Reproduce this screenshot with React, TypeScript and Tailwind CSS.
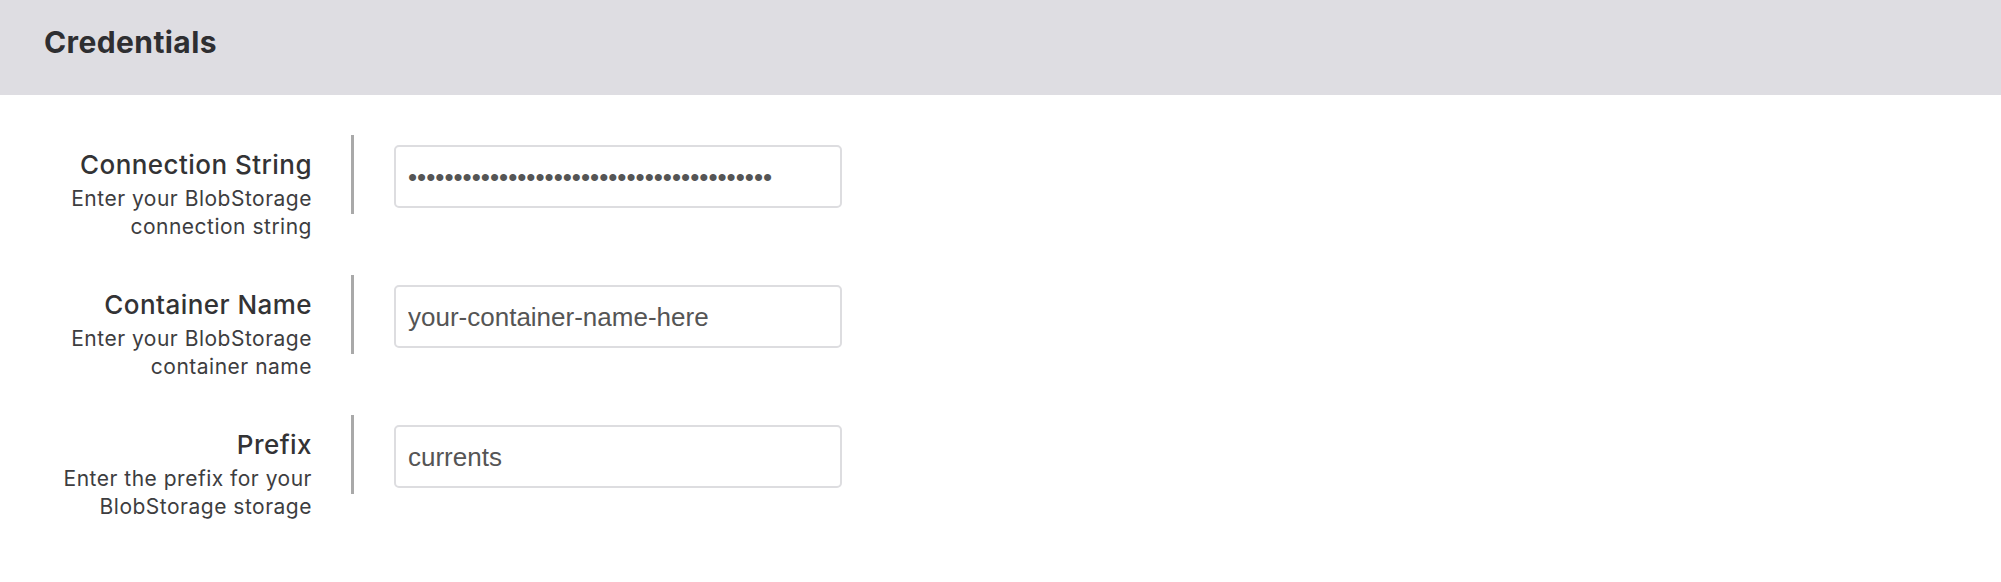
import React from "react";

const fields = [
  {
    label: "Connection String",
    desc: ["Enter your BlobStorage", "connection string"],
    type: "password",
    value: "x".repeat(40),
  },
  {
    label: "Container Name",
    desc: ["Enter your BlobStorage", "container name"],
    type: "text",
    value: "your-container-name-here",
  },
  {
    label: "Prefix",
    desc: ["Enter the prefix for your", "BlobStorage storage"],
    type: "text",
    value: "currents",
  },
];

export default function App() {
  return (
    <div className="w-[2001px] h-[582px] bg-white overflow-hidden" style={{ fontFamily: "Inter, 'Noto Sans', sans-serif" }}>
      <div className="h-[95px] bg-[#dedde2] flex items-center pl-[44px]">
        <h1 className="text-[30px] font-bold tracking-[0.4px] text-[#2e2e31] leading-none -mt-[12px]">Credentials</h1>
      </div>
      <div className="pt-[40px] flex flex-col">
        {fields.map((f) => (
          <div key={f.label} className="h-[140px] flex items-start">
            <div className="w-[312px] text-right mt-[14px]">
              <div className="text-[26px] leading-[31px] font-medium tracking-[0.45px] text-[#333335]">{f.label}</div>
              <div className="mt-[5px] text-[21px] leading-[28px] tracking-[0.5px] text-[#3d3d40]">
                {f.desc[0]}
                <br />
                {f.desc[1]}
              </div>
            </div>
            <div className="ml-[39px] w-[3px] h-[79px] bg-[#a9a9a9]" />
            <input
              type={f.type}
              defaultValue={f.value}
              readOnly
              className="ml-[40px] mt-[10px] w-[448px] h-[63px] border-2 border-[#dddde0] rounded-[5px] pl-[12px] pt-[2px] text-[26px] text-[#555] outline-none bg-white"
              style={{ fontFamily: "'Liberation Sans', Arial, sans-serif" }}
            />
          </div>
        ))}
      </div>
    </div>
  );
}
